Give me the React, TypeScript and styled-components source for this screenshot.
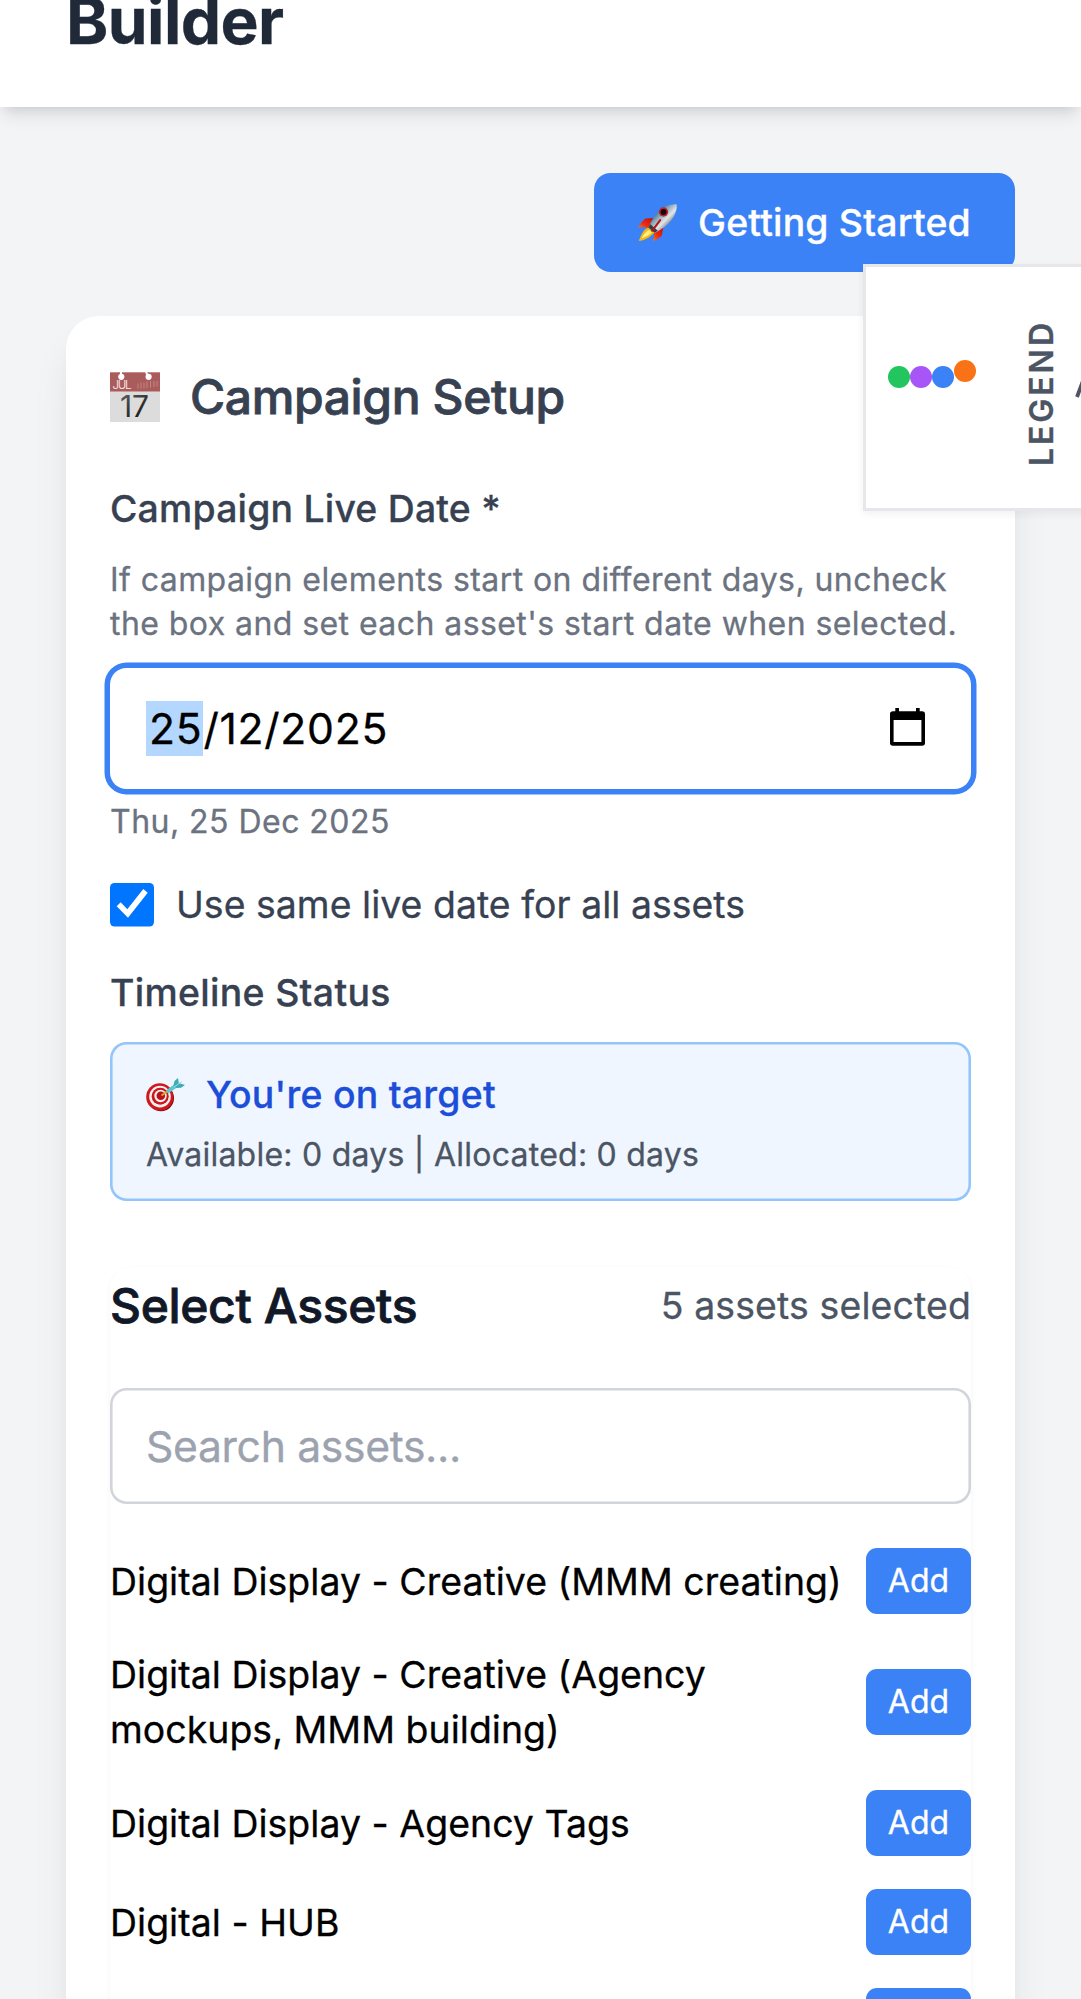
import React from "react";
import styled, { createGlobalStyle } from "styled-components";

const GlobalStyle = createGlobalStyle`
  *, *::before, *::after { box-sizing: border-box; }
  html, body { margin: 0; padding: 0; background: #f3f4f6; }
  body {
    font-family: Inter, "Liberation Sans", sans-serif;
    color: #000;
    -webkit-text-stroke: 0.3px;
  }
  h1, h2, h3, p { margin: 0; font-weight: inherit; }
  button { border: 0; font-family: inherit; cursor: pointer; }
  svg { display: block; flex: none; overflow: visible; }
`;

const Page = styled.div`
  position: relative;
  height: 1999px;
  overflow: hidden;
  background: #f3f4f6;
`;

const Header = styled.header`
  position: relative;
  z-index: 2;
  display: flex;
  align-items: flex-end;
  height: 107px;
  padding: 0 66px 42px;
  background: #fff;
  box-shadow: 0 11px 16.5px -2.75px rgba(0, 0, 0, 0.1),
    0 5.5px 11px -5.5px rgba(0, 0, 0, 0.1);
`;

const Title = styled.h1`
  font-size: 64px;
  font-weight: 700;
  line-height: 88px;
  letter-spacing: -0.55px;
  color: #1f2937;
`;

const Main = styled.main`
  display: flex;
  flex-direction: column;
  gap: 44px;
  padding: 66px;
`;

const Toolbar = styled.div`
  display: flex;
  justify-content: flex-end;
`;

const StartButton = styled.button`
  display: flex;
  align-items: center;
  gap: 21px;
  width: 421px;
  height: 99px;
  padding: 0 0 0 44px;
  border-radius: 16.5px;
  background: #3b82f6;
  color: #fff;
  font-size: 37.4px;
  font-weight: 500;
  line-height: 55px;
  letter-spacing: 0.18px;
  white-space: nowrap;
`;

const Card = styled.section`
  display: flex;
  flex-direction: column;
  min-height: 1800px;
  padding: 44px;
  border-radius: 33px;
  background: #fff;
  box-shadow: 0 27.5px 41.25px -8.25px rgba(0, 0, 0, 0.1),
    0 11px 16.5px -11px rgba(0, 0, 0, 0.1);
`;

const CardHeading = styled.div`
  display: flex;
  align-items: center;
  gap: 30px;
  height: 73px;
  margin-bottom: 48px;
`;

const SectionTitle = styled.h2<{ $tone: string; $spacing: number }>`
  font-size: 48px;
  font-weight: 500;
  -webkit-text-stroke: 0.8px;
  line-height: 76px;
  letter-spacing: ${(p) => p.$spacing}px;
  color: ${(p) => p.$tone};
`;

const Label = styled.div<{ $spacing: number }>`
  font-size: 37.4px;
  font-weight: 500;
  line-height: 55px;
  letter-spacing: ${(p) => p.$spacing}px;
  color: #374151;
`;

const Hint = styled.p<{ $top: number; $spacing?: number; $tone?: string }>`
  margin-top: ${(p) => p.$top}px;
  font-size: 32px;
  line-height: 44px;
  letter-spacing: ${(p) => p.$spacing ?? 0.43}px;
  color: ${(p) => p.$tone ?? "#6b7280"};
  white-space: nowrap;
`;

const DateField = styled.div`
  display: flex;
  align-items: center;
  justify-content: space-between;
  height: 121px;
  margin-top: 22px;
  padding: 0 46px 0 36px;
  border-radius: 16.5px;
  background: #fff;
  box-shadow: 0 0 0 5.5px #3b82f6;

  > svg {
    margin-bottom: 3px;
  }
`;

const DateValue = styled.div`
  display: flex;
  font-size: 42.7px;
  line-height: 55px;
  letter-spacing: 0.7px;
`;

const ActiveSegment = styled.span`
  padding: 0 1px 0 3px;
  background: #b3d7ff;
`;

const CheckRow = styled.label`
  display: flex;
  align-items: center;
  gap: 22px;
  height: 55px;
  margin: 33px 0;
  font-size: 37.4px;
  letter-spacing: 0.04px;
  color: #374151;
`;

const StatusBox = styled.div`
  height: 159px;
  margin-top: 22px;
  padding: 24.75px 36px;
  border-radius: 16.5px;
  background: #eff6ff;
  box-shadow: inset 0 0 0 2.6px #93c5fd;
`;

const StatusLine = styled.div`
  display: flex;
  align-items: center;
  gap: 21px;
  font-size: 37.4px;
  font-weight: 500;
  line-height: 55px;
  letter-spacing: 0.24px;
  color: #1d4ed8;
`;

const AssetPanel = styled.section`
  display: flex;
  flex-direction: column;
  gap: 44px;
  min-height: 1200px;
  margin-top: 66px;
  border-radius: 22px;
  background: #fff;
  box-shadow: 0 2.75px 5.5px rgba(0, 0, 0, 0.05);
`;

const PanelHeader = styled.div`
  display: flex;
  align-items: center;
  justify-content: space-between;
  height: 77px;
`;

const Count = styled.span`
  font-size: 37.4px;
  line-height: 55px;
  letter-spacing: 0.14px;
  color: #4b5563;
`;

const SearchInput = styled.input`
  width: 100%;
  height: 116px;
  padding: 0 36px;
  border: 0;
  border-radius: 16.5px;
  outline: none;
  background: #fff;
  box-shadow: inset 0 0 0 2.6px #d1d5db;
  font-family: inherit;
  font-size: 42.7px;
  letter-spacing: -0.35px;

  &::placeholder {
    color: #9ca3af;
    opacity: 1;
  }
`;

const AssetList = styled.ul`
  display: flex;
  flex-direction: column;
  gap: 33px;
  margin: 0;
  padding: 0;
  list-style: none;
`;

const AssetRow = styled.li`
  display: flex;
  align-items: center;
  justify-content: space-between;
  gap: 22px;
  font-size: 37.4px;
  line-height: 55px;
  letter-spacing: 0.05px;
`;

const AddButton = styled.button`
  flex: none;
  width: 105px;
  height: 66px;
  padding: 0;
  border-radius: 11px;
  background: #3b82f6;
  color: #fff;
  font-size: 32px;
  line-height: 44px;
`;

const Legend = styled.aside`
  position: absolute;
  z-index: 3;
  top: 264px;
  left: 863px;
  display: flex;
  align-items: center;
  width: 260px;
  height: 247px;
  padding-left: 22px;
  border: 3px solid #e5e7eb;
  background: #fff;
  box-shadow: 0 2.75px 8px rgba(0, 0, 0, 0.06);
`;

const Dots = styled.div`
  display: flex;
  align-items: flex-end;
  height: 27.5px;
  margin-bottom: 27px;
`;

const Dot = styled.span<{ $color: string; $lift?: boolean }>`
  width: 22px;
  height: 22px;
  margin-bottom: ${(p) => (p.$lift ? 5.5 : 0)}px;
  border-radius: 50%;
  background: ${(p) => p.$color};
`;

const LegendText = styled.span`
  margin: 12px 11px 0 44px;
  writing-mode: vertical-rl;
  transform: rotate(180deg);
  font-size: 32px;
  font-weight: 600;
  line-height: 44px;
  letter-spacing: 2.98px;
  color: #4b5563;
`;

const Rocket = () => (
  <svg width="39" height="37.5" viewBox="0 0 116 112">
    <defs>
      <linearGradient id="hull" x1="0.25" y1="0.25" x2="0.75" y2="0.75">
        <stop offset="0" stopColor="#2f6d92" />
        <stop offset="0.4" stopColor="#9fb9c8" />
        <stop offset="0.65" stopColor="#e4e6e8" />
        <stop offset="1" stopColor="#6f7a84" />
      </linearGradient>
      <linearGradient id="fin" x1="1" y1="0" x2="0" y2="1">
        <stop offset="0" stopColor="#b30f08" />
        <stop offset="0.6" stopColor="#f02a10" />
        <stop offset="1" stopColor="#ff7a1e" />
      </linearGradient>
    </defs>
    <path d="M50 42 L22 43 C12 50 4 62 0 71 C12 67 22 68 32 74Z" fill="url(#fin)" />
    <path d="M76 66 L71 94 C64 102 54 107 44 110 C49 100 48 90 48 82Z" fill="url(#fin)" />
    <path d="M30 70 C16 76 10 90 2 110 C18 108 34 102 50 84Z" fill="#f7b516" />
    <path d="M32 78 C22 84 16 92 10 102 C24 98 34 92 42 84Z" fill="#fff27a" />
    <path
      d="M115 1 C96 0 78 6 64 19 C51 32 39 50 31 70 L49 86 C70 78 88 62 98 50 C111 34 117 16 115 1Z"
      fill="url(#hull)"
    />
    <path d="M36 60 L59 80 L49 86 L31 70Z" fill="#31404c" />
    <circle cx="76" cy="24" r="14" fill="#c2202a" />
    <circle cx="76" cy="24" r="9" fill="#120c10" />
    <path d="M66 48 L42 80" stroke="#b3170f" strokeWidth="6" strokeLinecap="round" />
  </svg>
);

const CalendarEmoji = () => (
  <svg width="50" height="50" viewBox="0 0 50 50">
    <defs>
      <linearGradient id="digits" x1="0" y1="0" x2="0.6" y2="1">
        <stop offset="0" stopColor="#6b6b6b" />
        <stop offset="1" stopColor="#111" />
      </linearGradient>
    </defs>
    <rect width="50" height="50" fill="#dcdcdc" />
    <rect width="50" height="19.5" fill="#a95c5b" />
    <path d="M0 .5H50" stroke="#c58c8b" />
    <path d="M11 0V4M36 0L38 4" stroke="#fff" strokeWidth="2" />
    <circle cx="11.3" cy="4.8" r="3.1" fill="#fff" />
    <circle cx="38.6" cy="4.8" r="3.1" fill="#fff" />
    <path
      d="M28 11.5V16.5M31 10.5V16.5M34 10.5V16.5M37 9.5V16M40.5 9V15.5M44 9V15M47 9V14.5"
      stroke="#c48482"
      strokeWidth="1"
    />
    <text x="2.5" y="17" fontSize="11.5" textLength="19" fill="#f0d9d8">
      JUL
    </text>
    <text x="10" y="45" fontSize="30" textLength="29" fill="url(#digits)">
      17
    </text>
  </svg>
);

const Target = () => (
  <svg width="39" height="35" viewBox="0 0 39 35">
    <circle cx="15" cy="21.3" r="13" fill="#7d0d10" />
    <circle cx="13.8" cy="19.9" r="13.6" fill="#cf171c" />
    <circle cx="14" cy="19.6" r="10.8" fill="#f6efef" />
    <circle cx="14.2" cy="19.3" r="8.5" fill="#c9161c" />
    <circle cx="14.5" cy="19" r="6.2" fill="#f6efef" />
    <circle cx="14.8" cy="18.8" r="4.3" fill="#b81218" />
    <path d="M15.5 18.5L22 14" stroke="#d9a52c" strokeWidth="2" />
    <path d="M20 13.5L28 7.5L31 10.5L22 16.5Z" fill="#5cc6cf" />
    <path d="M27.5 8.5L28.5 4L32 1L32.8 6L39 8L35 10.8L30.5 11Z" fill="#3fabb5" />
    <path d="M28 10L36 4.5" stroke="#9be3e6" strokeWidth="1" />
  </svg>
);

const DatePickerIcon = () => (
  <svg width="35" height="38" viewBox="0 0 35 38">
    <path
      fillRule="evenodd"
      d="M5.3 0H9V3.2H26V0H29.7V3.2H32Q35 3.2 35 6V35Q35 37.7 32 37.7H3Q0 37.7 0 35V6Q0 3.2 3 3.2H5.3ZM3.6 12V34H31.4V12Z"
      fill="#000"
    />
  </svg>
);

const Checkbox = () => (
  <svg width="44" height="44" viewBox="0 0 44 44">
    <rect width="44" height="43.6" rx="4.5" fill="#0075ff" />
    <path d="M6.7 23.2L10.7 19.3L17.3 26.3L33.3 6L37.7 9.7L18 34.7Z" fill="#fff" />
  </svg>
);

const Caret = () => (
  <svg width="20" height="24" viewBox="0 0 20 24">
    <path d="M2 21L9 2L16 21" fill="none" stroke="#4b5563" strokeWidth="3.8" />
  </svg>
);

const assets = [
  "Digital Display - Creative (MMM creating)",
  "Digital Display - Creative (Agency mockups, MMM building)",
  "Digital Display - Agency Tags",
  "Digital - HUB",
  "Digital - Landing Page",
];

export default function App() {
  return (
    <Page>
      <GlobalStyle />
      <Header>
        <Title>Builder</Title>
      </Header>
      <Main>
        <Toolbar>
          <StartButton>
            <Rocket />
            Getting Started
          </StartButton>
        </Toolbar>
        <Card>
          <CardHeading>
            <CalendarEmoji />
            <SectionTitle $tone="#374151" $spacing={-0.38}>
              Campaign Setup
            </SectionTitle>
          </CardHeading>
          <Label $spacing={0.2}>Campaign Live Date *</Label>
          <Hint $top={22}>
            If campaign elements start on different days, uncheck
            <br />
            the box and set each asset's start date when selected.
          </Hint>
          <DateField>
            <DateValue>
              <ActiveSegment>25</ActiveSegment>
              <span>/12/2025</span>
            </DateValue>
            <DatePickerIcon />
          </DateField>
          <Hint $top={11} $spacing={0.47}>
            Thu, 25 Dec 2025
          </Hint>
          <CheckRow>
            <Checkbox />
            Use same live date for all assets
          </CheckRow>
          <Label $spacing={0.32}>Timeline Status</Label>
          <StatusBox>
            <StatusLine>
              <Target />
              You're on target
            </StatusLine>
            <Hint $top={11} $spacing={0.24} $tone="#4b5563">
              Available: 0 days | Allocated: 0 days
            </Hint>
          </StatusBox>
          <AssetPanel>
            <PanelHeader>
              <SectionTitle $tone="#111827" $spacing={-0.36}>
                Select Assets
              </SectionTitle>
              <Count>5 assets selected</Count>
            </PanelHeader>
            <SearchInput placeholder="Search assets..." />
            <AssetList>
              {assets.map((name) => (
                <AssetRow key={name}>
                  <span>{name}</span>
                  <AddButton>Add</AddButton>
                </AssetRow>
              ))}
            </AssetList>
          </AssetPanel>
        </Card>
      </Main>
      <Legend>
        <Dots>
          <Dot $color="#22c55e" />
          <Dot $color="#a855f7" />
          <Dot $color="#3b82f6" />
          <Dot $color="#f97316" $lift />
        </Dots>
        <LegendText>LEGEND</LegendText>
        <Caret />
      </Legend>
    </Page>
  );
}
